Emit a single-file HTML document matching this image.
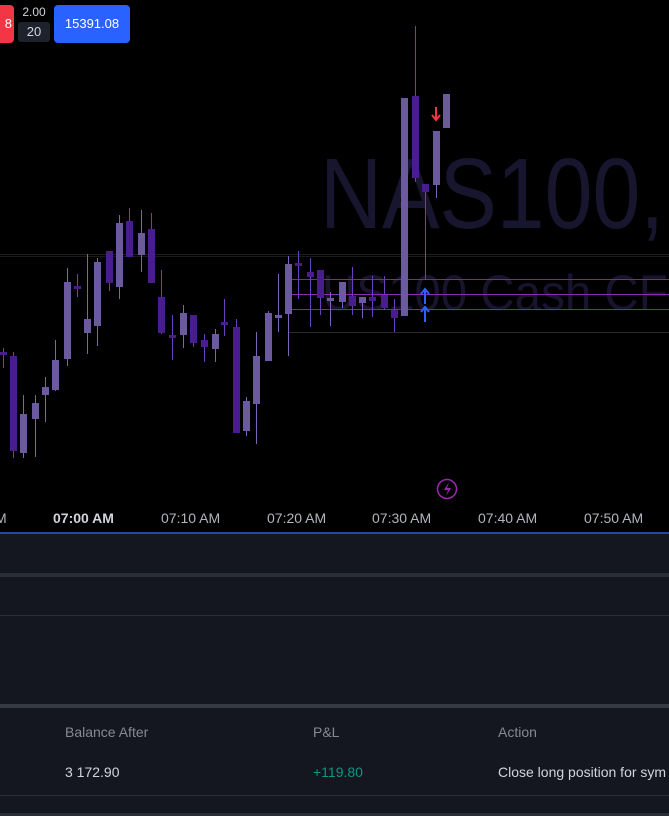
<!DOCTYPE html>
<html><head><style>
body{margin:0;width:669px;height:816px;overflow:hidden;background:#000;font-family:"Liberation Sans",sans-serif;position:relative}
.a{position:absolute}
</style></head><body>
<svg class="a" style="left:0;top:0" width="669" height="533">
<text x="0" y="0" font-size="100" fill="#18152e" font-family="Liberation Sans" transform="translate(320,228) scale(0.86,1)">NAS100,</text>
<text x="0" y="0" font-size="50" fill="#17142c" font-family="Liberation Sans" transform="translate(322,310) scale(0.95,1)">US100 Cash CF</text>
<line x1="0" y1="254.5" x2="669" y2="254.5" stroke="#1f1f1f"/>
<line x1="0" y1="256.5" x2="669" y2="256.5" stroke="#1a1a1a"/>
<line x1="288" y1="332.5" x2="669" y2="332.5" stroke="#2a2a2a"/>
<line x1="288" y1="279.5" x2="669" y2="279.5" stroke="#6a2fb0"/>
<line x1="288" y1="294.5" x2="669" y2="294.5" stroke="#8a2cb0"/>
<line x1="288" y1="309.5" x2="669" y2="309.5" stroke="#6a2fb0"/>
<g id="c"></g>
<path d="M436 107v12M432 115l4 5 4-5" stroke="#f23645" stroke-width="2" fill="none"/>
<path d="M425 304v-14M421 294l4-5 4 5M425 322v-14M421 312l4-5 4 5" stroke="#2962ff" stroke-width="2" fill="none"/>
<circle cx="447" cy="489" r="9.5" fill="none" stroke="#9c27b0" stroke-width="1.5"/>
<path d="M449 482l-5 8h4l-2 6 5-8h-4z" fill="#9c27b0"/>
<text font-size="14" fill="#b2b5be" y="523"><tspan x="-5">M</tspan><tspan x="53" font-weight="bold" fill="#d1d4dc">07:00 AM</tspan><tspan x="161">07:10 AM</tspan><tspan x="267">07:20 AM</tspan><tspan x="372">07:30 AM</tspan><tspan x="478">07:40 AM</tspan><tspan x="584">07:50 AM</tspan></text>
</svg>
<div class="a" style="left:-4px;top:5px;width:18px;height:38px;background:#f23645;border-radius:4px;color:#fff;font-size:13px;line-height:38px;text-align:right;padding-right:2px;box-sizing:border-box">8</div>
<div class="a" style="left:18px;top:5px;width:32px;text-align:center;color:#d1d4dc;font-size:12px">2.00</div>
<div class="a" style="left:18px;top:22px;width:32px;height:20px;background:#1e222d;border-radius:3px;text-align:center;color:#d1d4dc;font-size:13px;line-height:20px">20</div>
<div class="a" style="left:54px;top:5px;width:76px;height:38px;background:#2962ff;border-radius:4px;text-align:center;color:#fff;font-size:13px;line-height:38px">15391.08</div>
<div class="a" style="left:0;top:532px;width:669px;height:2px;background:#2449a6"></div>
<div class="a" style="left:0;top:534px;width:669px;height:282px;background:#141720"></div>
<div class="a" style="left:0;top:573px;width:669px;height:4px;background:#2a2e39"></div>
<div class="a" style="left:0;top:615px;width:669px;height:1px;background:#2a2e39"></div>
<div class="a" style="left:0;top:704px;width:669px;height:4px;background:#363a45"></div>
<div class="a" style="left:65px;top:724px;color:#868993;font-size:14px">Balance After</div>
<div class="a" style="left:313px;top:724px;color:#868993;font-size:14px">P&amp;L</div>
<div class="a" style="left:498px;top:724px;color:#868993;font-size:14px">Action</div>
<div class="a" style="left:65px;top:764px;color:#d1d4dc;font-size:14px">3 172.90</div>
<div class="a" style="left:313px;top:764px;color:#089981;font-size:14px">+119.80</div>
<div class="a" style="left:498px;top:764px;color:#d1d4dc;font-size:14px;white-space:nowrap">Close long position for sym</div>
<div class="a" style="left:0;top:795px;width:669px;height:1px;background:#2a2e39"></div>
<div class="a" style="left:0;top:813px;width:669px;height:3px;background:#2a2e39"></div>
<script>
var d=[[2,352,354,348,368,0],[10,356,451,352,458,0],[18,414,453,395,458,1],[27,403,419,395,457,1],[35,387,395,377,422,1],[43,360,390,340,391,1],[52,282,359,268,366,1],[60,286,289,274,297,0],[68,319,333,254,354,1],[76,262,326,258,346,1],[85,251,283,251,291,0],[93,223,287,215,299,1],[101,221,257,208,257,0],[110,233,255,210,272,1],[118,229,283,213,283,0],[126,297,333,270,334,0],[134,335,337,315,360,0],[143,313,335,305,348,1],[151,315,343,315,347,0],[159,340,347,334,362,0],[168,334,349,329,362,1],[175,322,323,299,336,0],[184,327,433,319,433,0],[192,401,431,397,436,1],[200,356,404,332,444,1],[209,313,361,311,361,1],[217,315,316,274,332,1],[225,264,314,256,356,1],[233,263,266,251,299,0],[242,272,277,258,327,0],[250,270,298,270,315,0],[258,298,299,292,326,1],[267,282,302,282,308,1],[275,296,306,267,315,0],[283,297,303,297,318,1],[291,297,301,276,317,0],[300,295,308,276,310,0],[308,310,318,299,332,0]];
d=d.map(function(c){c[0]=Math.round(c[0]*1.28);return c;});
d.push([404,98,316,98,316,1],[415,96,178,26,182,0],[425,184,192,184,279,0],[436,131,185,131,198,1],[446,94,128,94,128,1]);
var s='';d.forEach(function(c){var x=c[0];var col=c[5]?'#6b5a9e':'#4a1d8f';var w=c[5]?'#7b63b8':'#6d3fc0';
s+='<line x1="'+(x+.5)+'" y1="'+c[3]+'" x2="'+(x+.5)+'" y2="'+c[4]+'" stroke="'+w+'"/>';
s+='<rect x="'+(x-3)+'" y="'+c[1]+'" width="7" height="'+Math.max(3,c[2]-c[1])+'" fill="'+col+'"/>';});
document.getElementById('c').innerHTML=s;
</script>
</body></html>
